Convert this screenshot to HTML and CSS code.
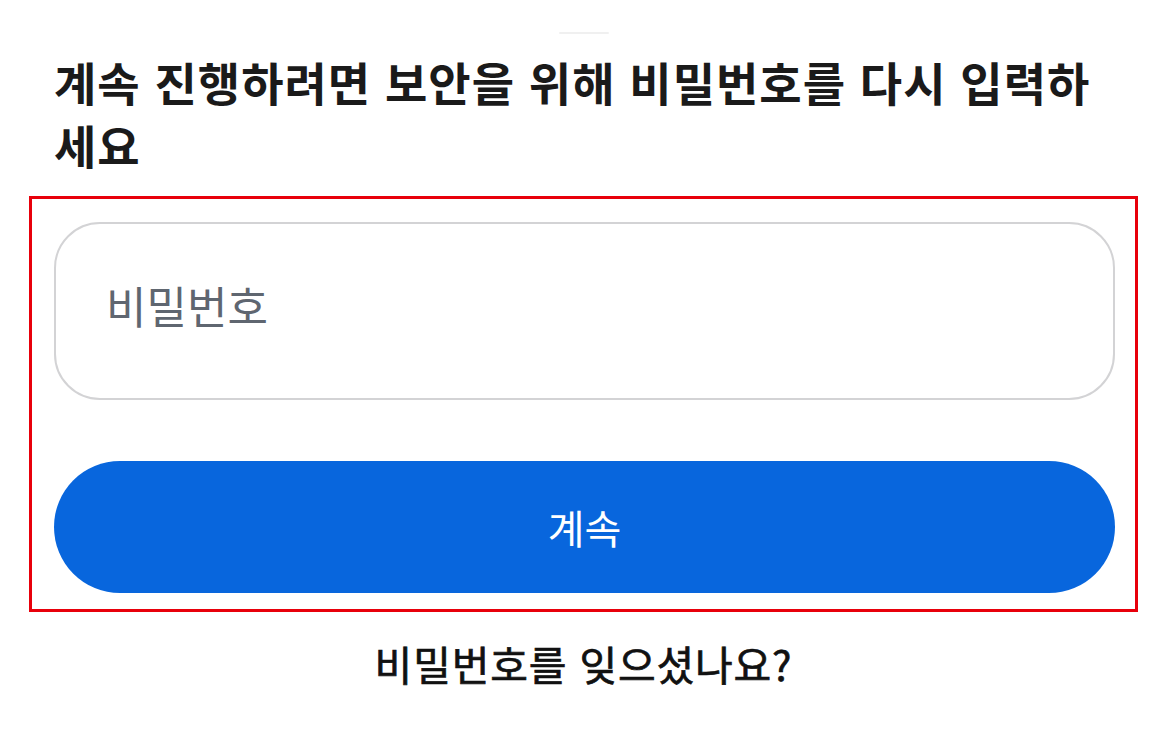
FILE: index.html
```html
<!DOCTYPE html>
<html lang="ko">
<head>
<meta charset="utf-8">
<link rel="stylesheet" href="styles.css">
</head>
<body>
<div class="page">
  <div class="grabber"></div>
  <h1 class="title">계속 진행하려면 보안을 위해 비밀번호를 다시 입력하세요</h1>
  <div class="highlight">
    <div class="field"><span class="placeholder">비밀번호</span></div>
    <button class="continue">계속</button>
  </div>
  <a class="forgot">비밀번호를 잊으셨나요?</a>
</div>
</body>
</html>
```
FILE: styles.css
```css
html, body {
  margin: 0;
  padding: 0;
  background: #ffffff;
}
body {
  font-family: "Noto Sans CJK KR", "Noto Sans", sans-serif;
  color: #1a1a1a;
}
.page {
  width: 1172px;
  height: 737px;
  overflow: hidden;
  display: flex;
  flex-direction: column;
  padding: 0 34px 0 29px;
  box-sizing: border-box;
}
.grabber {
  align-self: center;
  width: 50px;
  height: 2px;
  margin-top: 32px;
  background: #f0f0f0;
  border-radius: 1px;
}
.title {
  margin: 16px 30px 0 25px;
  font-size: 46px;
  line-height: 63px;
  font-weight: 700;
  letter-spacing: 1px;
  color: #1a1a1a;
}
.highlight {
  margin-top: 20px;
  border: 3px solid #e8000b;
  padding: 23px 20px 16px 22px;
  display: flex;
  flex-direction: column;
  gap: 61px;
}
.field {
  height: 178px;
  box-sizing: border-box;
  border: 2px solid #d3d3d5;
  border-radius: 46px;
  display: flex;
  align-items: center;
  padding: 0 0 12px 50px;
}
.placeholder {
  font-size: 44px;
  color: #5f6670;
}
.continue {
  height: 132px;
  border: none;
  border-radius: 66px;
  background: #0866dd;
  color: #ffffff;
  font-family: inherit;
  font-size: 40px;
  font-weight: 400;
  padding: 0;
}
.forgot {
  align-self: center;
  margin-top: 21px;
  font-size: 41px;
  font-weight: 400;
  letter-spacing: 0.8px;
  color: #111111;
  -webkit-text-stroke: 0.7px #111111;
}
```
